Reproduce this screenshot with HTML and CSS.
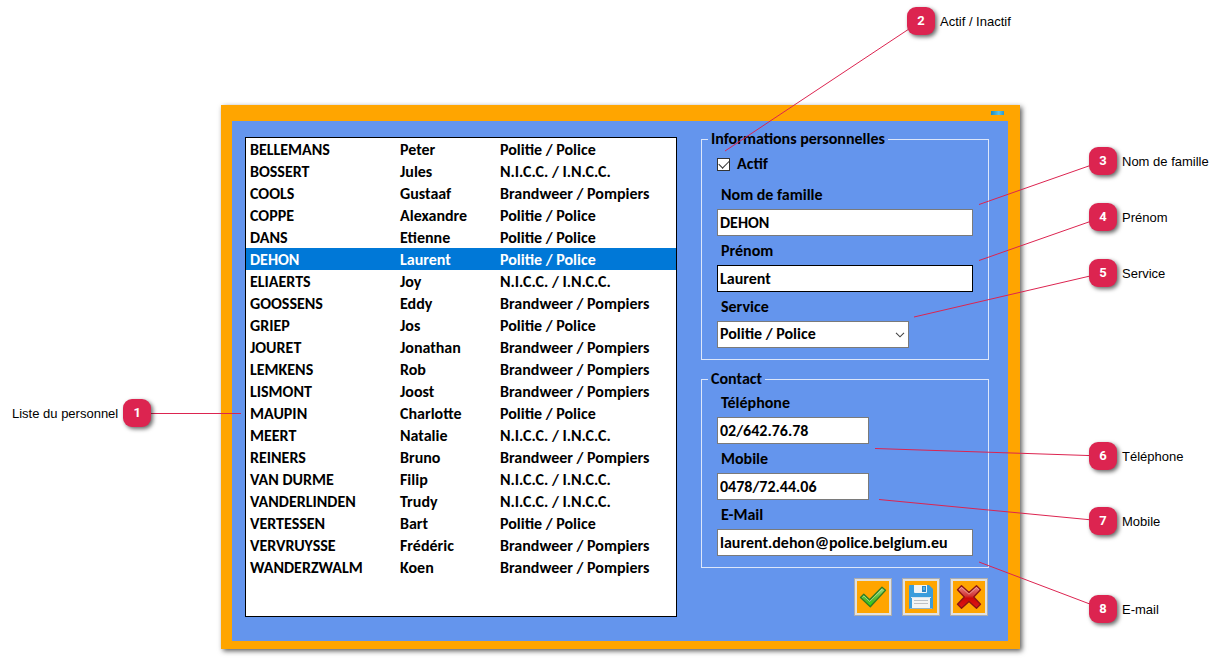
FILE: index.html
```html
<!DOCTYPE html>
<html lang="fr">
<head>
<meta charset="utf-8">
<title>Gestion du personnel</title>
<link rel="stylesheet" href="styles.css">
</head>
<body>
<main class="figure">
  <section class="window">
    <header class="titlebar">
      <button class="minimize" type="button" aria-label="Réduire"></button>
    </header>
    <div class="content">
      <div class="staff">
        <table class="staff-table">
          <colgroup><col class="col-name"><col class="col-first"><col></colgroup>
          <tbody>
            <tr><td>BELLEMANS</td><td>Peter</td><td>Politie / Police</td></tr>
            <tr><td>BOSSERT</td><td>Jules</td><td>N.I.C.C. / I.N.C.C.</td></tr>
            <tr><td>COOLS</td><td>Gustaaf</td><td>Brandweer / Pompiers</td></tr>
            <tr><td>COPPE</td><td>Alexandre</td><td>Politie / Police</td></tr>
            <tr><td>DANS</td><td>Etienne</td><td>Politie / Police</td></tr>
            <tr class="selected"><td>DEHON</td><td>Laurent</td><td>Politie / Police</td></tr>
            <tr><td>ELIAERTS</td><td>Joy</td><td>N.I.C.C. / I.N.C.C.</td></tr>
            <tr><td>GOOSSENS</td><td>Eddy</td><td>Brandweer / Pompiers</td></tr>
            <tr><td>GRIEP</td><td>Jos</td><td>Politie / Police</td></tr>
            <tr><td>JOURET</td><td>Jonathan</td><td>Brandweer / Pompiers</td></tr>
            <tr><td>LEMKENS</td><td>Rob</td><td>Brandweer / Pompiers</td></tr>
            <tr><td>LISMONT</td><td>Joost</td><td>Brandweer / Pompiers</td></tr>
            <tr><td>MAUPIN</td><td>Charlotte</td><td>Politie / Police</td></tr>
            <tr><td>MEERT</td><td>Natalie</td><td>N.I.C.C. / I.N.C.C.</td></tr>
            <tr><td>REINERS</td><td>Bruno</td><td>Brandweer / Pompiers</td></tr>
            <tr><td>VAN DURME</td><td>Filip</td><td>N.I.C.C. / I.N.C.C.</td></tr>
            <tr><td>VANDERLINDEN</td><td>Trudy</td><td>N.I.C.C. / I.N.C.C.</td></tr>
            <tr><td>VERTESSEN</td><td>Bart</td><td>Politie / Police</td></tr>
            <tr><td>VERVRUYSSE</td><td>Frédéric</td><td>Brandweer / Pompiers</td></tr>
            <tr><td>WANDERZWALM</td><td>Koen</td><td>Brandweer / Pompiers</td></tr>
          </tbody>
        </table>
      </div>
      <form class="details">
        <fieldset class="group personal">
          <legend>Informations personnelles</legend>
          <div class="check-row">
            <input class="check" type="checkbox" id="actif" checked>
            <label for="actif">Actif</label>
          </div>
          <div class="field">
            <label for="nom">Nom de famille</label>
            <input class="box" type="text" id="nom" value="DEHON">
          </div>
          <div class="field">
            <label for="prenom">Prénom</label>
            <input class="box active" type="text" id="prenom" value="Laurent">
          </div>
          <div class="field">
            <label for="service">Service</label>
            <div class="select-wrap">
              <select class="box" id="service">
                <option>Politie / Police</option>
                <option>N.I.C.C. / I.N.C.C.</option>
                <option>Brandweer / Pompiers</option>
              </select>
              <svg class="chevron" viewBox="0 0 10 6" aria-hidden="true"><path d="M1 .8 5 4.8 9 .8" fill="none" stroke="#444" stroke-width="1.1"/></svg>
            </div>
          </div>
        </fieldset>
        <fieldset class="group">
          <legend>Contact</legend>
          <div class="field">
            <label for="tel">Téléphone</label>
            <input class="box short" type="text" id="tel" value="02/642.76.78">
          </div>
          <div class="field">
            <label for="mobile">Mobile</label>
            <input class="box short" type="text" id="mobile" value="0478/72.44.06">
          </div>
          <div class="field">
            <label for="mail">E-Mail</label>
            <input class="box" type="text" id="mail" value="laurent.dehon@police.belgium.eu">
          </div>
        </fieldset>
        <div class="actions">
          <button class="tool" type="button" aria-label="Valider">
            <svg viewBox="0 0 32 32" aria-hidden="true">
              <defs><linearGradient id="green" x1="0" y1="0" x2="0" y2="1"><stop offset="0" stop-color="#a8dc8a"/><stop offset=".5" stop-color="#5cc038"/><stop offset="1" stop-color="#3fa81a"/></linearGradient></defs>
              <path d="M3.500 16.500 6.800 13.300 12.600 18.800 25 6.300 28.500 9.300 13.300 25.800Z" fill="url(#green)" stroke="#2f7d24" stroke-width="1.300" stroke-linejoin="round"/>
              <path d="M5.500 16.300 6.900 15 12.600 20.500 25 8.200" fill="none" stroke="#cdeebb" stroke-width="1" opacity=".6"/>
              <path d="M8 19.500 12.600 22.500 16.500 19.600 13.300 24.300Z" fill="#35e010"/>
            </svg>
          </button>
          <button class="tool" type="button" aria-label="Enregistrer">
            <svg viewBox="0 0 32 32" aria-hidden="true">
              <path d="M5 4H24L28 8V27Q28 28 27 28H5Q4 28 4 27V5Q4 4 5 4Z" fill="#3a9cdc"/>
              <path d="M9 4H22V11Q22 12 21 12H10Q9 12 9 11Z" fill="#f0f3f5"/>
              <path d="M17 5H21V11H17Z" fill="#2f86c4"/>
              <path d="M18 6H20V9H18Z" fill="#55b4ea"/>
              <path d="M7 16H25V28H7Z" fill="#f3f4f5"/>
              <path d="M6 16H26V17H6Z" fill="#d8e6ef"/>
              <path d="M9 19.500H23M9 22.500H23" stroke="#bcc0c6" stroke-width="1"/>
              <path d="M5 27.500H27" stroke="#8fb4cc" stroke-width="1"/>
            </svg>
          </button>
          <button class="tool" type="button" aria-label="Annuler">
            <svg viewBox="0 0 32 32" aria-hidden="true">
              <defs><linearGradient id="red" x1="0" y1="0" x2="0" y2="1"><stop offset="0" stop-color="#e88a86"/><stop offset=".45" stop-color="#d23434"/><stop offset=".55" stop-color="#cc0808"/><stop offset="1" stop-color="#e01818"/></linearGradient></defs>
              <path d="M8.500 4.700 16 11.500 23.500 4.700 27.500 8.700 20.700 16 27.500 23.300 23.500 27.300 16 20.500 8.500 27.300 4.500 23.300 11.300 16 4.500 8.700Z" fill="url(#red)" stroke="#8c1414" stroke-width="1.400" stroke-linejoin="round"/>
              <path d="M6 8.700 8.500 6.400 16 13.200 23.500 6.400 26 8.700" fill="none" stroke="#f6c0bc" stroke-width="1" opacity=".6"/>
            </svg>
          </button>
        </div>
      </form>
    </div>
  </section>

  <svg class="lines lines-left" viewBox="0 0 260 658" aria-hidden="true">
    <path d="M137 413.500H241"/>
  </svg>
  <svg class="lines lines-right" viewBox="704 0 520 658" aria-hidden="true">
    <path d="M921 21 725 151M1103 161 979 204.500M1103 217 979 260.500M1103 273 914 317M1103 456 875 448.500M1103 521 879 499.500M1103 609 979 562"/>
  </svg>

  <div class="callout c1"><span>Liste du personnel</span><b class="pin">1</b></div>
  <div class="callout c2"><b class="pin">2</b><span>Actif / Inactif</span></div>
  <div class="callout c3"><b class="pin">3</b><span>Nom de famille</span></div>
  <div class="callout c4"><b class="pin">4</b><span>Prénom</span></div>
  <div class="callout c5"><b class="pin">5</b><span>Service</span></div>
  <div class="callout c6"><b class="pin">6</b><span>Téléphone</span></div>
  <div class="callout c7"><b class="pin">7</b><span>Mobile</span></div>
  <div class="callout c8"><b class="pin">8</b><span>E-mail</span></div>
</main>
</body>
</html>
```
FILE: styles.css
```css
* { box-sizing: border-box; }

body {
  margin: 0;
  background: #fff;
  color: #000;
  font-family: Calibri, Carlito, Lato, sans-serif;
  font-size: 16px;
  font-weight: 700;
  line-height: 20px;
}

.figure {
  position: relative;
  min-width: 1000px;
  padding: 105px 204px 9px 221px;
}

.window {
  padding: 0 12px 8px 11px;
  background: #ffa500;
  box-shadow: 2px 2px 5px rgba(0, 0, 0, 0.65);
}

.titlebar {
  display: flex;
  justify-content: flex-end;
  align-items: flex-start;
  height: 16px;
  padding: 6px 4px 0 0;
}

.minimize {
  width: 13px;
  height: 4px;
  padding: 0;
  border: 0;
  background: linear-gradient(90deg, #1c8cc0, #5cc0ea 60%, #2a9ad0);
}

.content {
  display: flex;
  gap: 24px;
  padding: 8px 19px 24px 13px;
  background: #6495ed;
}

/* Staff list */
.staff {
  flex: 1;
  margin-top: 8px;
  border: 1px solid #000;
  background: #fff;
}

.staff-table {
  width: 100%;
  border-collapse: collapse;
  table-layout: fixed;
}

.col-name { width: 150px; }
.col-first { width: 100px; }

.staff-table td {
  height: 22px;
  padding: 2px 0 0 4px;
  line-height: 20px;
  white-space: nowrap;
}

.selected {
  background: #0078d7;
  color: #fff;
}

/* Details form */
.details {
  width: 288px;
}

.group {
  min-width: 0;
  margin: 0 0 9px;
  padding: 4px 15px 11px;
  border: 1px solid #dce6fa;
}

.personal { padding-top: 5px; }

.group legend {
  margin-left: -9px;
  padding: 0 3px;
}

.check-row {
  display: flex;
  align-items: center;
  gap: 7px;
  margin-bottom: 11px;
}

.check {
  appearance: none;
  width: 13px;
  height: 13px;
  margin: 0;
  border: 1px solid #333;
  background: #fff;
}

.check:checked::before {
  content: "";
  display: block;
  width: 9px;
  height: 5px;
  margin: 2px 1px;
  border: solid #333;
  border-width: 0 0 1px 1px;
  transform: translateY(-1px) rotate(-45deg);
}

.field + .field { margin-top: 5px; }

.field label {
  display: block;
  margin-bottom: 4px;
  padding-left: 4px;
}

.box {
  display: block;
  width: 100%;
  height: 27px;
  padding: 0 2px 1px;
  border: 1px solid #7a7a7a;
  border-radius: 0;
  background: #fff;
  color: #000;
  font: inherit;
  appearance: none;
}

.active { border-color: #000; }
.short { width: 152px; }

.select-wrap {
  position: relative;
  width: 192px;
}

.chevron {
  position: absolute;
  top: 11px;
  right: 4px;
  width: 10px;
  height: 6px;
  pointer-events: none;
}

.actions {
  display: flex;
  justify-content: flex-end;
  gap: 10px;
  margin: 10px 1px 1px 0;
}

.tool {
  width: 38px;
  height: 38px;
  padding: 0;
  border: 1px solid #adadad;
  background: #ffa500;
  box-shadow: inset 0 0 0 2px #e1e1e1;
}

.tool svg {
  display: block;
  width: 32px;
  height: 32px;
  margin: 0 auto;
}

/* Callouts */
.lines {
  position: absolute;
  top: 0;
  height: 658px;
  fill: none;
  stroke: #dc2450;
  stroke-width: 1;
  pointer-events: none;
}

.lines-left { left: 0; width: 260px; }
.lines-right { right: 0; width: 520px; }

.callout {
  position: absolute;
  left: calc(100% - 135px);
  display: flex;
  align-items: center;
  gap: 5px;
  font: 13px/16px "Liberation Sans", Arial, sans-serif;
  white-space: nowrap;
}

.callout span { padding-top: 2px; }

.pin {
  width: 28px;
  height: 28px;
  border-radius: 9px;
  background: #dc2450;
  box-shadow: 2px 2px 4px rgba(0, 0, 0, 0.6);
  color: #fff;
  font: 700 13px/28px Roboto, "Noto Sans", sans-serif;
  text-align: center;
}

.c1 { top: 399px; left: 12px; }
.c2 { top: 7px; left: calc(100% - 317px); }
.c3 { top: 147px; }
.c4 { top: 203px; }
.c5 { top: 259px; }
.c6 { top: 442px; }
.c7 { top: 507px; }
.c8 { top: 595px; }
```
